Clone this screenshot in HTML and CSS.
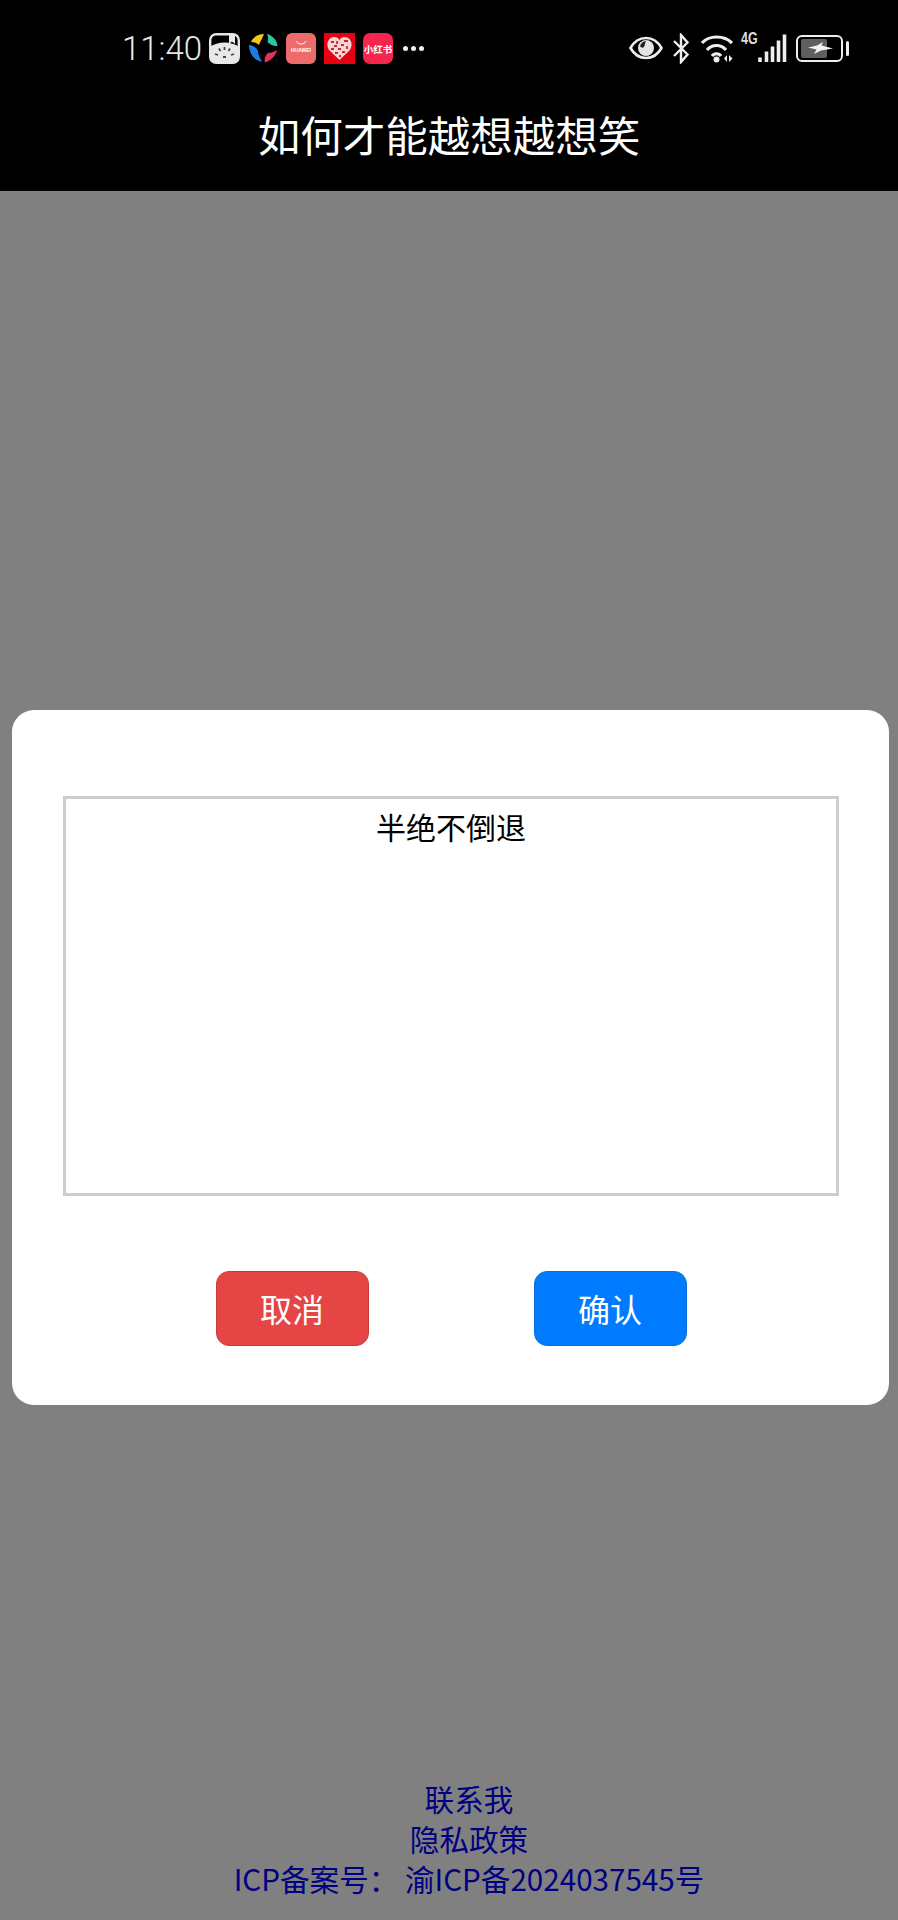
FILE: index.html
```html
<!DOCTYPE html>
<html lang="zh-CN">
<head>
<meta charset="utf-8">
<title>如何才能越想越想笑</title>
<link rel="stylesheet" href="styles.css">
</head>
<body>
<div class="page">
  <header class="top">
    <div class="status">
      <div class="status-left">
        <span class="time">11:40</span>
        <svg class="app" width="31" height="31" viewBox="0 0 31 31"><rect x="1.200" y="1.200" width="28.600" height="28.600" rx="6" fill="#000" stroke="#e6e6e6" stroke-width="2.400"/><path d="M1 14 C8 8 23 8 30 14 V25 a5 5 0 0 1 -5 5 H6 a5 5 0 0 1 -5 -5Z" fill="#e8e8e8"/><path d="M20 1h6v10l-3-2.500-3 2.500Z" fill="#e8e8e8"/><path d="M15.500 14v3M10 15.500l1.500 2.500M21 15.500l-1.500 2.500M6 21l3 1M25 21l-3 1M14 24h3" stroke="#444" stroke-width="1.800"/></svg>
        <svg class="app" width="30" height="30" viewBox="0 0 30 30"><path d="M3 9 C5 4 10 1 16 1 C14.500 5 12 9 11 12 C8 9.500 5.500 9 3 9Z" fill="#f7c516"/><path d="M19 1 C24 2 29 7 29.500 13 C26 13.500 22 11.500 19.500 9 C20.500 6 20 3.500 19 1Z" fill="#2bc7a2"/><path d="M1 12 C4 12 8 14 10 18 C10 22 12 25 14 28.500 C7 28 1 21 1 12Z" fill="#1b7ee2"/><path d="M29 17 C28 22 24 27 17 29.500 C16 26 17.500 22 20 20 C23 20 26 19 29 17Z" fill="#e92d5c"/></svg>
        <svg class="app" width="30" height="31" viewBox="0 0 30 31"><rect width="30" height="31" rx="6" fill="#ee6b6b"/><path d="M10 8 c2 4 8 4 10 0" fill="none" stroke="#fff" stroke-width="1"/><text x="15" y="19" class="tiny">HUAWEI</text></svg>
        <svg class="app" width="31" height="31" viewBox="0 0 31 31"><rect width="31" height="31" fill="#e60012"/><path d="M15.500 27 L5 17 C1 10 5 4 10.500 4 C13 4 15 5.500 15.500 7.500 C16 5.500 18 4 20.500 4 C26 4 30 10 26 17Z" fill="#f7d4d4"/><path d="M7 9h3M13 8v3M20 8h4M10 13h3M17 12h3M23 13v3M7 16h3M14 16h3M11 20h3M18 19h3M15 23h2" stroke="#d8242f" stroke-width="1.800"/></svg>
        <svg class="app" width="30" height="31" viewBox="0 0 30 31"><rect width="30" height="31" rx="7" fill="#f5254d"/><text x="15" y="20" class="xhs">小红书</text></svg>
        <span class="dots"><i></i><i></i><i></i></span>
      </div>
      <div class="status-right">
        <svg width="34" height="24" viewBox="0 0 34 24"><path d="M1.500 12 C6 4 12 2 17 2 S28 4 32.500 12 C28 20 22 22 17 22 S6 20 1.500 12Z" fill="none" stroke="#eee" stroke-width="2.600"/><circle cx="17" cy="12" r="8" fill="#e4e4e4"/><path d="M11 10 C12 7 14 5.500 17 5 C16 7 16 9 15 11 C14 12 12 12 11 10Z" fill="#222"/></svg>
        <svg class="bt" width="18" height="31" viewBox="0 0 18 31"><path d="M2 8 L15.500 21.500 L9 29 V2 L15.500 9.500 L2 23" fill="none" stroke="#eee" stroke-width="2.400"/></svg>
        <svg width="34" height="29" viewBox="0 0 34 29"><path d="M2 9 C9 1 24 1 32 9" fill="none" stroke="#eee" stroke-width="3.200"/><path d="M7 16 C12 10 21 10 26 16" fill="none" stroke="#eee" stroke-width="3.200"/><path d="M12 22 C14 19 19 19 21 22" fill="none" stroke="#eee" stroke-width="3.200"/><circle cx="16.500" cy="25.500" r="3" fill="#eee"/><path d="M24 24.500 l3-3.500 v7Z M29 21 v7 l3.500-3.500Z" fill="#eee"/></svg>
        <span class="net">
          <span class="net-label">4G</span>
          <svg class="bars" width="30" height="28" viewBox="0 0 30 28"><path d="M3 23.500v4.500M9.500 17.500v10.500M15.500 12.500v15.500M21.500 6.500v21.500M27.500 0.500v27.500" stroke="#eee" stroke-width="3.600"/></svg>
        </span>
        <span class="battery"><span class="cell"><span class="level"></span><svg class="bolt" width="25" height="12" viewBox="0 0 25 12"><path d="M0 5.500 L9 3.500 L15 0 L13.500 3.500 L25 6.500 L13 8.500 L6 12 L8.500 7.500Z" fill="#f2f2f2"/></svg></span><i class="nub"></i></span>
      </div>
    </div>
    <h1 class="title">如何才能越想越想笑</h1>
  </header>
  <main class="stage">
    <section class="modal">
      <div class="note">半绝不倒退</div>
      <div class="actions">
        <button class="btn btn-cancel" type="button">取消</button>
        <button class="btn btn-ok" type="button">确认</button>
      </div>
    </section>
  </main>
  <footer class="foot">
    <a>联系我</a>
    <a>隐私政策</a>
    <a>ICP备案号： 渝ICP备2024037545号</a>
  </footer>
</div>
</body>
</html>
```
FILE: styles.css
```css
* { box-sizing: border-box; }
html, body { margin: 0; padding: 0; background: #808080; }
body { font-family: "Noto Sans CJK SC", "Noto Sans", sans-serif; }
.page { position: relative; width: 898px; height: 1920px; display: flex; flex-direction: column; }
.top { background: #000; height: 191px; color: #fff; display: flex; flex-direction: column; }
.status { display: flex; justify-content: space-between; align-items: center; height: 66px; padding: 30px 49px 0 122px; }
.status-left { display: flex; align-items: center; gap: 8px; }
.status-right { display: flex; align-items: center; gap: 10px; }
.time { font-family: Roboto, sans-serif; font-weight: 300; font-size: 33px; color: #e8e8e8; margin-right: 1px; width: 78px; }
.app { display: block; flex: none; }
.tiny { font-family: "Liberation Sans", sans-serif; font-size: 5px; font-weight: 700; fill: #fff; text-anchor: middle; }
.xhs { font-family: "Noto Sans CJK SC", sans-serif; font-size: 9.500px; font-weight: 700; fill: #fff; text-anchor: middle; }
.dots { display: flex; gap: 3px; margin-left: 2px; }
.dots i { width: 5px; height: 5px; border-radius: 50%; background: #eee; }
.bt { margin-left: -1px; }
.net { position: relative; display: block; width: 46px; height: 28px; padding-left: 17px; margin-left: -4px; }
.net svg { display: block; }
.net-label { position: absolute; left: 1px; top: -2px; font-family: "Liberation Sans", sans-serif; font-size: 16px; font-weight: 700; color: #ddd; line-height: 14px; transform: scaleX(0.78); transform-origin: left center; }
.battery { display: flex; align-items: center; gap: 3px; }
.cell { position: relative; display: block; width: 47px; height: 27px; border: 2.500px solid #eee; border-radius: 6px; padding: 2px 3px; }
.level { display: block; width: 26px; height: 100%; background: #5f5f5f; border-radius: 2px; }
.bolt { position: absolute; left: 10px; top: 5px; }
.nub { display: block; width: 3px; height: 15px; background: #eee; border-radius: 2px; }
.title { margin: 0; font-size: 42.500px; line-height: 52px; font-weight: 400; text-align: center; color: #fff; padding-top: 42px; }
.stage { flex: 1; display: flex; align-items: flex-start; justify-content: center; padding-top: 519px; }
.modal { width: 877px; height: 695px; background: #fff; border-radius: 22px; padding: 86px 50px 0 51px; margin-left: 3px; }
.note { height: 400px; border: 3px solid #ccc; font-size: 30px; line-height: 54px; text-align: center; color: #000; }
.actions { display: flex; justify-content: center; gap: 165px; margin-top: 75px; }
.btn { width: 153px; height: 75px; border-radius: 13px; border: 1px solid; font-family: inherit; font-size: 32px; color: #fff; padding: 0 0 2px; }
.btn-cancel { background: #e54545; border-color: #c73a3a; }
.btn-ok { background: #007bff; border-color: #0c6fd8; }
.foot { height: 141px; padding-left: 40px; display: flex; flex-direction: column; align-items: center; font-size: 29.600px; line-height: 40px; color: #000080; }
```
